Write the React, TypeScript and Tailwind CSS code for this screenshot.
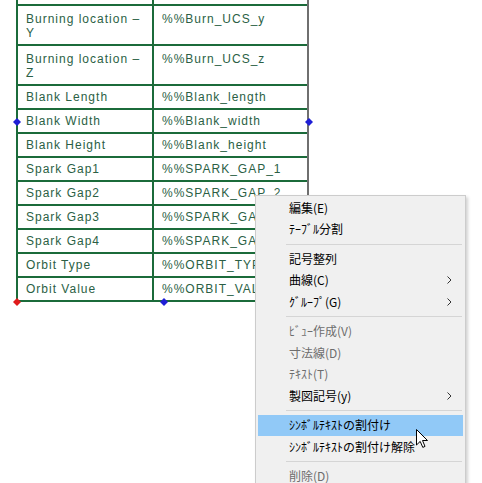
import React from 'react';

const LINE = 'border-[#1b6b3a]';

interface Row {
  label: React.ReactNode;
  value: string;
  tall?: boolean;
}

const ROWS: Row[] = [
  { label: <>Burning location –<br />Y</>, value: '%%Burn_UCS_y', tall: true },
  { label: <>Burning location –<br />Z</>, value: '%%Burn_UCS_z', tall: true },
  { label: 'Blank Length', value: '%%Blank_length' },
  { label: 'Blank Width', value: '%%Blank_width' },
  { label: 'Blank Height', value: '%%Blank_height' },
  { label: 'Spark Gap1', value: '%%SPARK_GAP_1' },
  { label: 'Spark Gap2', value: '%%SPARK_GAP_2' },
  { label: 'Spark Gap3', value: '%%SPARK_GAP_3' },
  { label: 'Spark Gap4', value: '%%SPARK_GAP_4' },
  { label: 'Orbit Type', value: '%%ORBIT_TYPE' },
  { label: 'Orbit Value', value: '%%ORBIT_VALUE' },
];

type MenuEntry =
  | { sep: true }
  | { sep?: false; label: string; disabled?: boolean; sub?: boolean; active?: boolean };

const MENU: MenuEntry[] = [
  { label: '編集(E)' },
  { label: 'ﾃｰﾌﾞﾙ分割' },
  { sep: true },
  { label: '記号整列' },
  { label: '曲線(C)', sub: true },
  { label: 'ｸﾞﾙｰﾌﾟ(G)', sub: true },
  { sep: true },
  { label: 'ﾋﾞｭｰ作成(V)', disabled: true },
  { label: '寸法線(D)', disabled: true },
  { label: 'ﾃｷｽﾄ(T)', disabled: true },
  { label: '製図記号(y)', sub: true },
  { sep: true },
  { label: 'ｼﾝﾎﾞﾙﾃｷｽﾄの割付け', active: true },
  { label: 'ｼﾝﾎﾞﾙﾃｷｽﾄの割付け解除' },
  { sep: true },
  { label: '削除(D)', disabled: true },
];

const Diamond = ({ color, className }: { color: string; className: string }) => (
  <svg width="8" height="8" viewBox="0 0 8 8" className={`absolute ${className}`}>
    <path d="M4 0 L8 4 L4 8 L0 4 Z" fill={color} />
  </svg>
);

const Chevron = () => (
  <svg width="5" height="8" viewBox="0 0 5 8" className="shrink-0">
    <path d="M0.5 0.5 L4 4 L0.5 7.5" fill="none" stroke="#333" strokeWidth="1" />
  </svg>
);

const Cursor = () => (
  <svg width="13" height="20" viewBox="0 0 13 20" className="absolute left-[160px] top-[233px]">
    <path
      d="M0.5 0.5 L0.5 16 L4.2 12.4 L6.8 18.4 L9 17.4 L6.5 11.5 L11.5 11.5 Z"
      fill="#fff"
      stroke="#000"
      strokeWidth="1"
      strokeLinejoin="miter"
    />
  </svg>
);

export default function App() {
  return (
    <div className="relative w-[482px] h-[483px] overflow-hidden bg-white">
      {/* drawing table */}
      <div className="relative ml-4 w-[293px] border-l-2 border-r-2 border-l-[#1b6b3a] border-r-[#6f6f6f] font-['Liberation_Sans',Arial,sans-serif] text-[12px] tracking-[1px] text-[#2b5f45]">
        <div className={`h-[6px] border-b-2 ${LINE} flex`}>
          <div className={`w-[136px] border-r-2 ${LINE}`} />
        </div>
        {ROWS.map((r, i) => (
          <div
            key={i}
            className={`flex border-b-2 ${LINE} ${r.tall ? 'h-[40px]' : 'h-[24px]'}`}
          >
            <div
              className={`w-[136px] border-r-2 ${LINE} pl-2 leading-[14px] ${
                r.tall ? 'pt-[6px]' : 'flex items-center'
              }`}
            >
              <span>{r.label}</span>
            </div>
            <div
              className={`flex-1 pl-2 leading-[14px] whitespace-nowrap overflow-hidden ${
                r.tall ? 'pt-[6px]' : 'flex items-center'
              }`}
            >
              {r.value}
            </div>
          </div>
        ))}
        <Diamond color="#1f1fd6" className="left-[-5px] top-[118px]" />
        <Diamond color="#1f1fd6" className="right-[-6px] top-[118px]" />
        <Diamond color="#e01b1b" className="left-[-5px] top-[298px]" />
        <Diamond color="#1f1fd6" className="left-[142px] top-[298px]" />
      </div>

      {/* context menu */}
      <div className="absolute left-[255px] top-[195px] w-[211px] h-[300px] bg-[#f0f0f0] border border-[#cccccc] shadow-[2px_2px_3px_rgba(0,0,0,0.18)] pt-[1px] font-['Noto_Sans_CJK_JP','Noto_Sans',sans-serif] text-[12px]">
        {MENU.map((m, i) =>
          m.sep ? (
            <div key={i} className="h-[8px] flex items-center pl-[30px] pr-[3px]">
              <div className="h-px w-full bg-[#d5d5d5]" />
            </div>
          ) : (
            <div
              key={i}
              className={`mx-[2px] h-[21.5px] flex items-center pl-[31px] pr-[11px] ${
                m.active ? 'bg-[#91c9f7]' : ''
              } ${m.disabled ? 'text-[#6d6d6d]' : 'text-black'}`}
            >
              <span className="flex-1 leading-none whitespace-nowrap">{m.label}</span>
              {m.sub && <Chevron />}
            </div>
          )
        )}
        <Cursor />
      </div>
    </div>
  );
}
